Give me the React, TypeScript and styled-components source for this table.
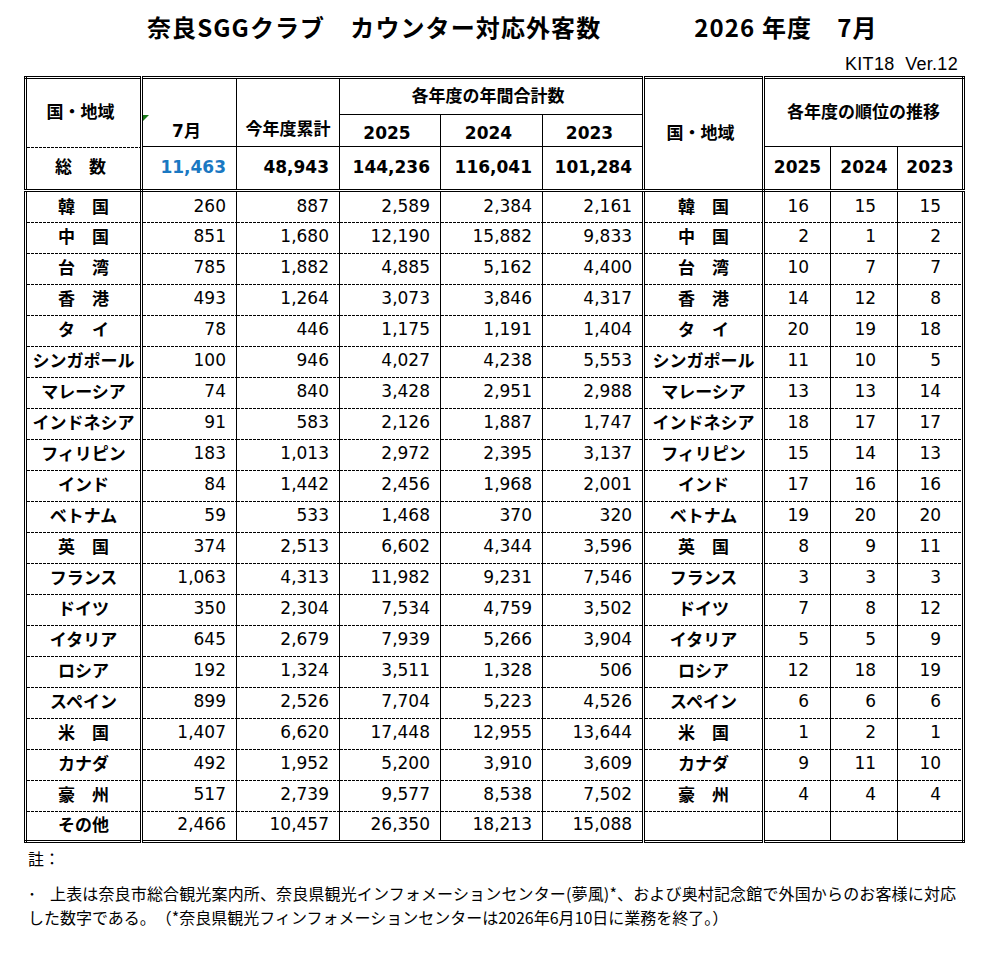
import React from "react";
import styled, { createGlobalStyle, css } from "styled-components";

const GlobalStyle = createGlobalStyle`
  html, body {
    margin: 0;
    padding: 0;
    background: #ffffff;
  }
  body {
    font-family: "Noto Sans CJK JP", "Noto Sans", sans-serif;
    color: #000;
  }
`;

const CJK = `"Noto Sans CJK JP", "Noto Sans", sans-serif`;
const NUM = `"DejaVu Sans", "Noto Sans CJK JP", sans-serif`;

const DASH = `repeating-linear-gradient(90deg, #000 0 3px, transparent 3px 4px)`;

const Page = styled.div`
  width: 992px;
  height: 962px;
  overflow: hidden;
`;

const TitleBar = styled.div`
  display: flex;
  align-items: baseline;
  padding-left: 147px;
  margin-top: 9px;
  height: 36px;
  line-height: 36px;
  font-family: ${CJK};
  font-weight: 700;
  font-size: 24px;
  letter-spacing: 1.1px;
`;

const TitleMain = styled.span``;

const TitleDate = styled.span`
  margin-left: 93px;
`;

const Version = styled.div`
  margin-top: 9px;
  padding-right: 34px;
  height: 20px;
  line-height: 20px;
  text-align: right;
  font-family: "Liberation Sans", sans-serif;
  font-size: 18px;
  letter-spacing: 0.3px;
  white-space: pre;
`;

const Table = styled.table`
  margin: 2px 0 0 24px;
  border-collapse: collapse;
  table-layout: fixed;
  width: 939px;
  border: 3px double #000;
  font-family: ${NUM};
  font-size: 17px;
`;

type CellProps = {
  $align?: "left" | "center" | "right";
  $dr?: boolean;
  $dbottom?: boolean;
  $dashTop?: boolean;
  $noBottom?: boolean;
  $valign?: "top" | "middle" | "bottom";
  $rank?: boolean;
  $blue?: boolean;
  $low?: boolean;
};

const cellBase = css<CellProps>`
  border: 1px solid #000;
  padding: 0 10px 2px 4px;
  white-space: nowrap;
  overflow: visible;
  text-align: ${(p) => p.$align || "center"};
  vertical-align: ${(p) => p.$valign || "middle"};
  ${(p) => p.$rank && "padding-right: 21px;"}
  ${(p) => p.$low && "padding-top: 4px; padding-bottom: 0;"}
  ${(p) => p.$dr && "border-right: 3px double #000;"}
  ${(p) => p.$dbottom && "border-bottom: 3px double #000;"}
  ${(p) => p.$noBottom && "border-bottom: none;"}
  ${(p) =>
    p.$dashTop &&
    css`
      border-top: none;
      background: ${DASH} left top / 100% 1px no-repeat;
    `}
  ${(p) => p.$blue && "color: #1a78c2;"}
`;

const Head = styled.th<CellProps>`
  ${cellBase}
  position: relative;
  font-weight: 700;
  line-height: 22px;
`;

const Cell = styled.td<CellProps>`
  ${cellBase}
  font-weight: 400;
  line-height: 22px;
`;

const Label = styled.td<CellProps>`
  ${cellBase}
  padding: 0 0 2px 0;
  font-family: ${CJK};
  font-weight: 700;
  line-height: 22px;
`;

const HeadRow = styled.tr<{ $h: number }>`
  height: ${(p) => p.$h}px;
`;

const BodyRow = styled.tr`
  height: 31px;

  & > td {
    border-top: none;
    border-bottom: none;
  }

  & + & > td {
    background: ${DASH} left top / 100% 1px no-repeat;
  }
`;

const Marker = styled.span`
  position: absolute;
  left: 0;
  top: 36px;
  width: 0;
  height: 0;
  border-top: 6px solid #1a7a1a;
  border-right: 6px solid transparent;
`;

const Footer = styled.div`
  padding-left: 28px;
  margin-top: 3px;
  font-family: ${CJK};
  font-size: 16px;
  line-height: 24px;
`;

const Note = styled.div`
  margin-bottom: 11px;
`;

const Line = styled.div<{ $spread?: boolean }>`
  ${(p) => p.$spread && "letter-spacing: 0.15px;"}
`;

const Bullet = styled.span`
  display: inline-block;
  width: 22px;
`;

const widths = [116, 95, 103, 101, 102, 101, 120, 67, 67, 66];

type Row = [string, number, number, number, number, number, number?, number?, number?];

const rows: Row[] = [
  ["韓　国", 260, 887, 2589, 2384, 2161, 16, 15, 15],
  ["中　国", 851, 1680, 12190, 15882, 9833, 2, 1, 2],
  ["台　湾", 785, 1882, 4885, 5162, 4400, 10, 7, 7],
  ["香　港", 493, 1264, 3073, 3846, 4317, 14, 12, 8],
  ["タ　イ", 78, 446, 1175, 1191, 1404, 20, 19, 18],
  ["シンガポール", 100, 946, 4027, 4238, 5553, 11, 10, 5],
  ["マレーシア", 74, 840, 3428, 2951, 2988, 13, 13, 14],
  ["インドネシア", 91, 583, 2126, 1887, 1747, 18, 17, 17],
  ["フィリピン", 183, 1013, 2972, 2395, 3137, 15, 14, 13],
  ["インド", 84, 1442, 2456, 1968, 2001, 17, 16, 16],
  ["ベトナム", 59, 533, 1468, 370, 320, 19, 20, 20],
  ["英　国", 374, 2513, 6602, 4344, 3596, 8, 9, 11],
  ["フランス", 1063, 4313, 11982, 9231, 7546, 3, 3, 3],
  ["ドイツ", 350, 2304, 7534, 4759, 3502, 7, 8, 12],
  ["イタリア", 645, 2679, 7939, 5266, 3904, 5, 5, 9],
  ["ロシア", 192, 1324, 3511, 1328, 506, 12, 18, 19],
  ["スペイン", 899, 2526, 7704, 5223, 4526, 6, 6, 6],
  ["米　国", 1407, 6620, 17448, 12955, 13644, 1, 2, 1],
  ["カナダ", 492, 1952, 5200, 3910, 3609, 9, 11, 10],
  ["豪　州", 517, 2739, 9577, 8538, 7502, 4, 4, 4],
  ["その他", 2466, 10457, 26350, 18213, 15088],
];

const fmt = (n: number) => n.toLocaleString("en-US");

export default function App() {
  return (
    <Page>
      <GlobalStyle />
      <TitleBar>
        <TitleMain>奈良SGGクラブ　カウンター対応外客数</TitleMain>
        <TitleDate>2026 年度　7月</TitleDate>
      </TitleBar>
      <Version>{"KIT18  Ver.12"}</Version>

      <Table>
        <colgroup>
          {widths.map((w, i) => (
            <col key={i} style={{ width: w }} />
          ))}
        </colgroup>
        <thead>
          <HeadRow $h={37}>
            <Head rowSpan={2} $dr $noBottom>
              国・地域
            </Head>
            <Head rowSpan={2} $valign="bottom" style={{ paddingBottom: 4 }}>
              <Marker />
              7月
            </Head>
            <Head rowSpan={2} $valign="bottom" style={{ paddingBottom: 6, paddingRight: 4 }}>
              今年度累計
            </Head>
            <Head colSpan={3} $dr>
              各年度の年間合計数
            </Head>
            <Head rowSpan={3} $dr $dbottom>
              国・地域
            </Head>
            <Head colSpan={3} rowSpan={2} style={{ paddingRight: 4 }}>
              各年度の順位の推移
            </Head>
          </HeadRow>
          <HeadRow $h={32}>
            <Head $low>2025</Head>
            <Head $low>2024</Head>
            <Head $low $dr>
              2023
            </Head>
          </HeadRow>
          <HeadRow $h={44}>
            <Head $dr $dbottom $dashTop>
              総　数
            </Head>
            <Head $align="right" $dbottom $blue>
              11,463
            </Head>
            <Head $align="right" $dbottom>
              48,943
            </Head>
            <Head $align="right" $dbottom>
              144,236
            </Head>
            <Head $align="right" $dbottom>
              116,041
            </Head>
            <Head $align="right" $dbottom $dr>
              101,284
            </Head>
            <Head $dbottom style={{ paddingRight: 4 }}>2025</Head>
            <Head $dbottom style={{ paddingRight: 4 }}>2024</Head>
            <Head $dbottom style={{ paddingRight: 4 }}>2023</Head>
          </HeadRow>
        </thead>
        <tbody>
          {rows.map((r) => {
            const [name, m, ytd, a, b, c, r1, r2, r3] = r;
            const ranked = r1 !== undefined;
            return (
              <BodyRow key={name}>
                <Label $dr>{name}</Label>
                <Cell $align="right">{fmt(m)}</Cell>
                <Cell $align="right">{fmt(ytd)}</Cell>
                <Cell $align="right">{fmt(a)}</Cell>
                <Cell $align="right">{fmt(b)}</Cell>
                <Cell $align="right" $dr>
                  {fmt(c)}
                </Cell>
                <Label $dr>{ranked ? name : ""}</Label>
                <Cell $align="right" $rank>
                  {r1 ?? ""}
                </Cell>
                <Cell $align="right" $rank>
                  {r2 ?? ""}
                </Cell>
                <Cell $align="right" $rank>
                  {r3 ?? ""}
                </Cell>
              </BodyRow>
            );
          })}
        </tbody>
      </Table>

      <Footer>
        <Note>註：</Note>
        <Line $spread>
          <Bullet>･</Bullet>
          上表は奈良市総合観光案内所、奈良県観光インフォメーションセンター(夢風)*、および奥村記念館で外国からのお客様に対応
        </Line>
        <Line>
          した数字である。　（*奈良県観光フィンフォメーションセンターは2026年6月10日に業務を終了。）
        </Line>
      </Footer>
    </Page>
  );
}
